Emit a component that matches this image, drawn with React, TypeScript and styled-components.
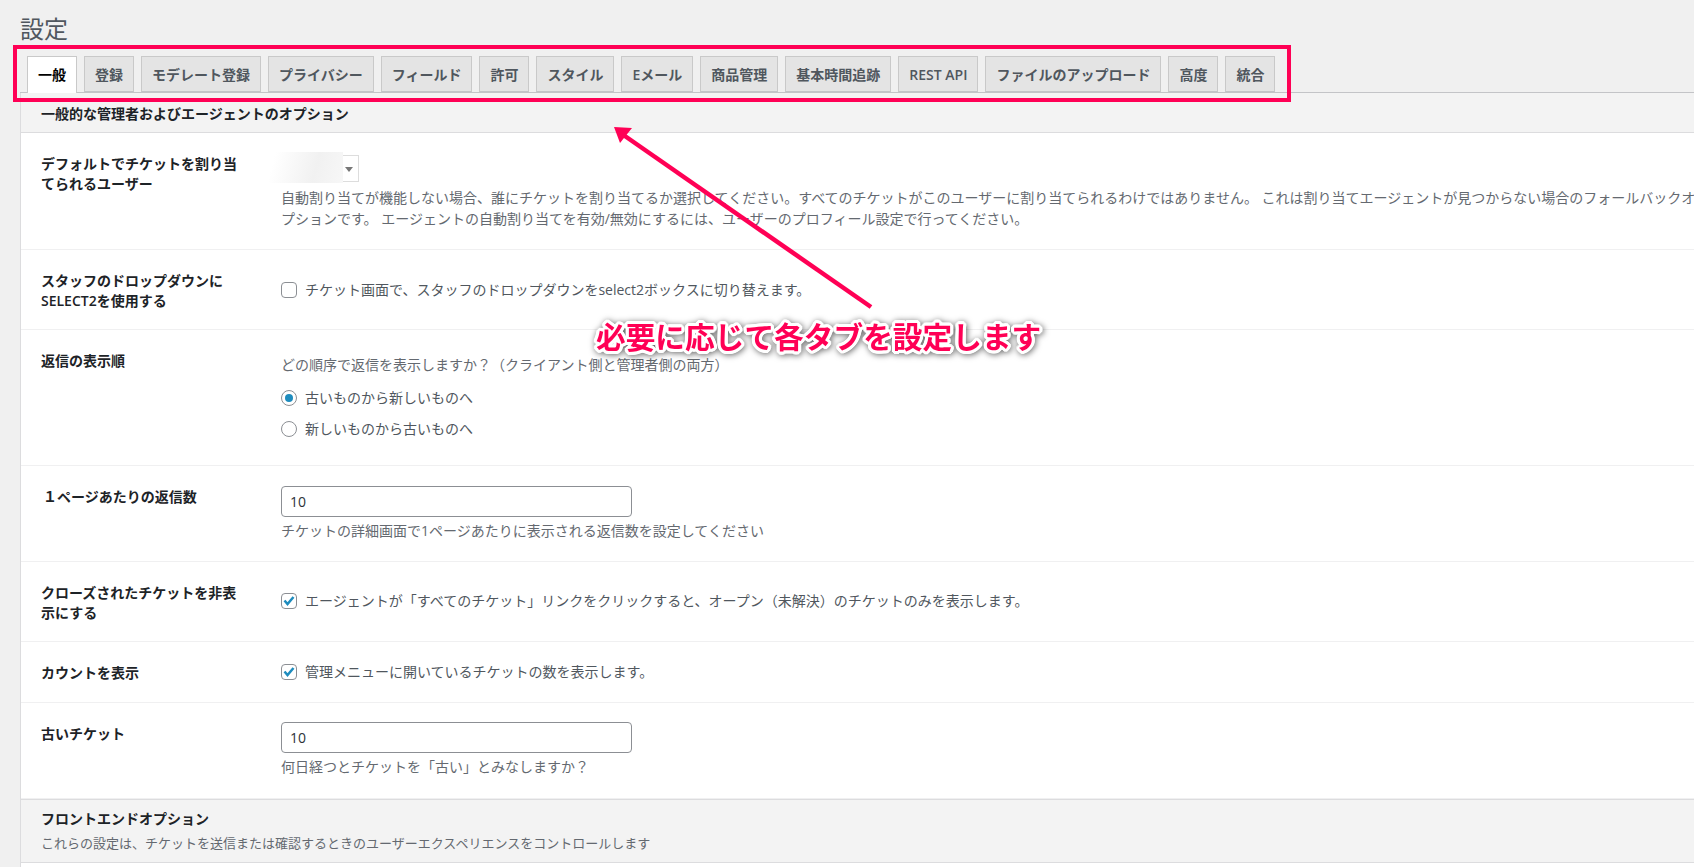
import React from "react";
import styled, { createGlobalStyle } from "styled-components";

const Global = createGlobalStyle`
  html, body { margin: 0; padding: 0; background: #f0f0f0; overflow: hidden; }
  body { font-family: "Open Sans", "Noto Sans CJK JP", sans-serif; width: 1694px; height: 867px; }
  * { box-sizing: border-box; }
`;
const Page = styled.div`position: relative; width: 1694px; height: 867px; overflow: hidden; padding: 14px 0 0 20px;`;
const Title = styled.h1`margin: 0 0 12px; font-size: 24px; font-weight: 400; line-height: 30px; color: #50575e; height: 30px;`;
const TabBar = styled.nav`display: flex; gap: 7px; padding-left: 7px; height: 37px; border-bottom: 1px solid #c3c4c7;`;
const Tab = styled.a<{ $active?: boolean }>`
  height: ${p => (p.$active ? "37px" : "36px")};
  padding: 0 10px;
  border: 1px solid #c9c9c9;
  border-bottom: ${p => (p.$active ? "none" : "1px solid #c3c4c7")};
  background: ${p => (p.$active ? "#fff" : "#e4e4e4")};
  color: ${p => (p.$active ? "#000" : "#50575e")};
  font-size: 14px; font-weight: 600; line-height: 35px; white-space: nowrap;
`;
const Card = styled.main`background: #fff; border-left: 1px solid #dcdcde; height: 775px; white-space: nowrap;`;
const SectionHead = styled.header<{ $height: number; $top: number }>`
  height: ${p => p.$height}px; padding: ${p => p.$top}px 0 0 20px; background: #f3f3f3;
  border-top: ${p => (p.$height > 50 ? "1px solid #dcdcde" : "none")};
  border-bottom: 1px solid #dcdcde;
`;
const SectionTitle = styled.h2`margin: 0; font-size: 14px; font-weight: 600; line-height: 21px; color: #1d2327;`;
const SectionDesc = styled.p`margin: 4px 0 0; font-size: 13px; line-height: 21px; color: #646970;`;
const Row = styled.section<{ $height: number }>`
  display: grid; grid-template-columns: 260px 1fr; height: ${p => p.$height}px;
  border-bottom: 1px solid #f0f0f1;
`;
const Label = styled.div<{ $indent?: number }>`
  padding: 21px 0 0 ${p => 20 + (p.$indent ?? 0)}px; font-size: 14px; font-weight: 600; line-height: 20px; color: #1d2327;
`;
const Field = styled.div<{ $top: number }>`padding-top: ${p => p.$top}px; color: #50575e; font-size: 14px; line-height: 21px;`;
const Desc = styled.p<{ $gap?: number }>`margin: ${p => p.$gap ?? 0}px 0 0; font-size: 14px; line-height: 21px; color: #646970;`;
const Option = styled.label<{ $gap?: number }>`display: flex; align-items: center; gap: 8px; height: 21px; margin-top: ${p => p.$gap ?? 0}px; color: #50575e;`;
const CheckBox = styled.span`width: 16px; height: 16px; border: 1px solid #8c8f94; border-radius: 4px; display: flex; align-items: center; justify-content: center; flex: none; background: #fff;`;
const Radio = styled.span`width: 16px; height: 16px; border: 1px solid #8c8f94; border-radius: 50%; display: flex; align-items: center; justify-content: center; flex: none; background: #fff;`;
const RadioDot = styled.span`width: 8px; height: 8px; border-radius: 50%; background: #1e8cbe;`;
const Input = styled.div`width: 351px; height: 31px; border: 1px solid #8c8f94; border-radius: 4px; background: #fff; padding: 0 8px; font-size: 14px; line-height: 29px; color: #2c3338;`;
const SelectBox = styled.div`position: relative; width: 78px; height: 27px; border: 1px solid #ddd; background: #fff;`;
const Caret = styled.span`position: absolute; right: 5px; top: 11px; width: 0; height: 0; border: 4px solid transparent; border-top: 5px solid #777; border-bottom: 0;`;
const Redact = styled.div`position: absolute; left: -13px; top: -4px; width: 74px; height: 31px; background: linear-gradient(105deg, #fff 8%, #f1f1f1 62%, #f7f7f7 100%);`;
const Highlight = styled.div`position: absolute; left: 13px; top: 45px; width: 1278px; height: 57px; border: 4px solid #ff0055; pointer-events: none;`;
const ArrowSvg = styled.svg`position: absolute; left: 0; top: 0; pointer-events: none;`;
const Callout = styled.div`
  position: absolute; left: 596px; top: 314px; font-size: 29.7px; font-weight: 700; line-height: 44px; color: #ff0055; white-space: nowrap;
  font-family: "Noto Sans CJK JP", sans-serif;
  text-shadow: 3px 0 0 #fff, -3px 0 0 #fff, 0 3px 0 #fff, 0 -3px 0 #fff, 2px 2px 0 #fff, -2px 2px 0 #fff, 2px -2px 0 #fff, -2px -2px 0 #fff, 3px 1px 0 #fff, -3px 1px 0 #fff, 3px -1px 0 #fff, -3px -1px 0 #fff, 1px 3px 0 #fff, -1px 3px 0 #fff, 1px -3px 0 #fff, -1px -3px 0 #fff;
  filter: drop-shadow(1px 1px 3px rgba(0,0,0,.6));
`;

const tabs = ["一般","登録","モデレート登録","プライバシー","フィールド","許可","スタイル","Eメール","商品管理","基本時間追跡","REST API","ファイルのアップロード","高度","統合"];

const Check = () => (
  <svg width="14" height="14" viewBox="0 0 14 14"><path d="M2.5 6.5 L5.5 10 L11.5 3" fill="none" stroke="#1e8cbe" strokeWidth="2.5" /></svg>
);

export default function App() {
  return (
    <Page>
      <Global />
      <Title>設定</Title>
      <TabBar>
        {tabs.map((t, i) => <Tab key={t} $active={i === 0}>{t}</Tab>)}
      </TabBar>
      <Card>
        <SectionHead $height={40} $top={10}><SectionTitle>一般的な管理者およびエージェントのオプション</SectionTitle></SectionHead>
        <Row $height={117}>
          <Label>デフォルトでチケットを割り当<br />てられるユーザー</Label>
          <Field $top={22}>
            <SelectBox><Redact /><Caret /></SelectBox>
            <Desc $gap={5}>自動割り当てが機能しない場合、誰にチケットを割り当てるか選択してください。すべてのチケットがこのユーザーに割り当てられるわけではありません。 これは割り当てエージェントが見つからない場合のフォールバックオ<br />プションです。 エージェントの自動割り当てを有効/無効にするには、ユーザーのプロフィール設定で行ってください。</Desc>
          </Field>
        </Row>
        <Row $height={80}>
          <Label>スタッフのドロップダウンに<br />SELECT2を使用する</Label>
          <Field $top={29}><Option><CheckBox />チケット画面で、スタッフのドロップダウンをselect2ボックスに切り替えます。</Option></Field>
        </Row>
        <Row $height={136}>
          <Label>返信の表示順</Label>
          <Field $top={24}>
            <Desc>どの順序で返信を表示しますか？（クライアント側と管理者側の両方）</Desc>
            <Option $gap={12}><Radio><RadioDot /></Radio>古いものから新しいものへ</Option>
            <Option $gap={10}><Radio />新しいものから古いものへ</Option>
          </Field>
        </Row>
        <Row $height={96}>
          <Label $indent={2}>１ページあたりの返信数</Label>
          <Field $top={20}>
            <Input>10</Input>
            <Desc $gap={3}>チケットの詳細画面で1ページあたりに表示される返信数を設定してください</Desc>
          </Field>
        </Row>
        <Row $height={80}>
          <Label>クローズされたチケットを非表<br />示にする</Label>
          <Field $top={28}><Option><CheckBox><Check /></CheckBox>エージェントが「すべてのチケット」リンクをクリックすると、オープン（未解決）のチケットのみを表示します。</Option></Field>
        </Row>
        <Row $height={61}>
          <Label>カウントを表示</Label>
          <Field $top={19}><Option><CheckBox><Check /></CheckBox>管理メニューに開いているチケットの数を表示します。</Option></Field>
        </Row>
        <Row $height={96}>
          <Label>古いチケット</Label>
          <Field $top={19}>
            <Input>10</Input>
            <Desc $gap={3}>何日経つとチケットを「古い」とみなしますか？</Desc>
          </Field>
        </Row>
        <SectionHead $height={64} $top={8}>
          <SectionTitle>フロントエンドオプション</SectionTitle>
          <SectionDesc>これらの設定は、チケットを送信または確認するときのユーザーエクスペリエンスをコントロールします</SectionDesc>
        </SectionHead>
      </Card>
      <Highlight />
      <ArrowSvg width="1694" height="867" viewBox="0 0 1694 867">
        <path d="M871 307 L622 134" fill="none" stroke="#ff0055" strokeWidth="4.5" />
        <path d="M614 127 L632 128 L620 143 Z" fill="#ff0055" />
      </ArrowSvg>
      <Callout>必要に応じて各タブを設定します</Callout>
    </Page>
  );
}
